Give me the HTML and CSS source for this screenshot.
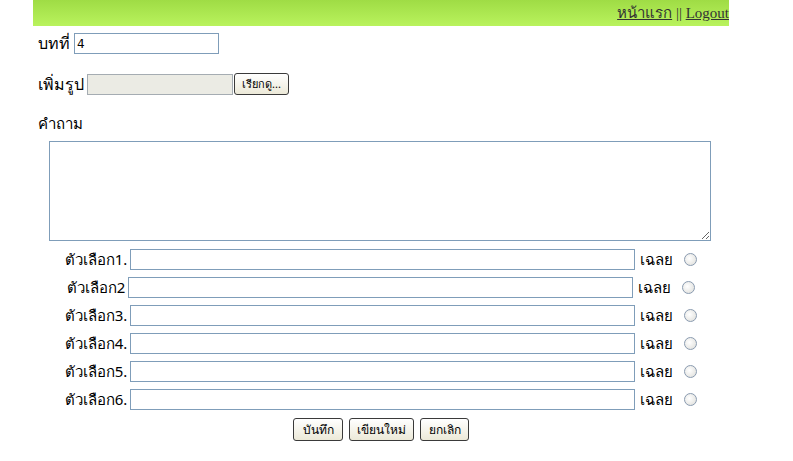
FILE: index.html
```html
<!DOCTYPE html>
<html lang="th">
<head>
    <meta charset="UTF-8">
    <title>เพิ่มข้อสอบ</title>
    <link rel="stylesheet" href="styles.css">
</head>
<body>
    <div class="page">
        <!-- Top bar -->
        <div class="topbar">
            <a href="#">หน้าแรก</a> || <a href="#">Logout</a>
        </div>

        <form class="form">
            <div class="field chapter-row">
                <span>บทที่</span>
                <input type="text" class="text chapter" value="4">
            </div>

            <div class="field file-row">
                <span>เพิ่มรูป</span>
                <span class="file">
                    <span class="file-box"></span>
                    <button type="button" class="btn browse">เรียกดู...</button>
                </span>
            </div>

            <div class="field question-label">คำถาม</div>
            <textarea class="question"></textarea>

            <!-- Choices -->
            <div class="choices">
                <div class="choice"><span>ตัวเลือก1.</span><input type="text" class="text answer"><span class="key">เฉลย</span><span class="radio"></span></div>
                <div class="choice"><span>ตัวเลือก2</span><input type="text" class="text answer"><span class="key">เฉลย</span><span class="radio"></span></div>
                <div class="choice"><span>ตัวเลือก3.</span><input type="text" class="text answer"><span class="key">เฉลย</span><span class="radio"></span></div>
                <div class="choice"><span>ตัวเลือก4.</span><input type="text" class="text answer"><span class="key">เฉลย</span><span class="radio"></span></div>
                <div class="choice"><span>ตัวเลือก5.</span><input type="text" class="text answer"><span class="key">เฉลย</span><span class="radio"></span></div>
                <div class="choice"><span>ตัวเลือก6.</span><input type="text" class="text answer"><span class="key">เฉลย</span><span class="radio"></span></div>
            </div>

            <div class="actions">
                <button type="button" class="btn save">บันทึก</button>
                <button type="button" class="btn reset">เขียนใหม่</button>
                <button type="button" class="btn cancel">ยกเลิก</button>
            </div>
        </form>
    </div>
</body>
</html>
```

FILE: styles.css
```css
/* General */
body {
    margin: 0;
    font-family: "Noto Sans", "DejaVu Sans", sans-serif;
    font-size: 15px;
    color: #000;
    background: #fff;
}

.page {
    width: 696px;
    margin-left: 33px;
}

/* Top bar */
.topbar {
    height: 26px;
    background: linear-gradient(#9fdc45, #b9f35d);
    text-align: right;
    font-family: "Liberation Serif", serif;
    font-size: 15px;
    line-height: 26px;
    color: #333;
}

.topbar a {
    color: #333;
}

/* Form rows */
.field {
    display: flex;
    align-items: center;
    gap: 3px;
    height: 21px;
    padding-left: 5px;
    font-size: 16px;
}

.chapter-row {
    margin-top: 7px;
    gap: 4px;
}

.file-row {
    margin-top: 19px;
    height: 22px;
}

.question-label {
    margin-top: 18px;
    height: 22px;
    font-size: 15px;
}

.text {
    box-sizing: border-box;
    height: 21px;
    border: 1px solid #7f9db9;
    padding: 0 2px;
    font-family: "DejaVu Sans", sans-serif;
    font-size: 12px;
    margin: 0;
}

.chapter {
    width: 145px;
}

.file {
    display: flex;
    align-items: center;
    gap: 1px;
}

.file-box {
    width: 146px;
    height: 21px;
    box-sizing: border-box;
    border: 1px solid #a5acb2;
    background: #ebebe4;
}

/* Question */
.question {
    display: block;
    box-sizing: border-box;
    width: 662px;
    height: 100px;
    margin: 6px 0 0 16px;
    border: 1px solid #7f9db9;
    resize: both;
}

/* Choices */
.choices {
    display: flex;
    flex-direction: column;
    gap: 7px;
    margin-top: 8px;
}

.choice {
    display: flex;
    align-items: center;
    justify-content: center;
    gap: 3px;
    height: 21px;
}

.answer {
    width: 505px;
}

.key {
    margin-left: 2px;
}

.radio {
    width: 11px;
    height: 11px;
    border: 1px solid #8a9bb0;
    border-radius: 50%;
    background: radial-gradient(circle at 40% 40%, #fff, #dcdcd8);
    margin-left: 8px;
}

/* Buttons */
.btn {
    box-sizing: border-box;
    height: 23px;
    padding: 0;
    border: 1px solid #3a3a3a;
    border-radius: 3px;
    background: linear-gradient(#ffffff, #ece9d8);
    font-family: "Noto Sans", sans-serif;
    font-size: 12px;
    color: #000;
}

.browse {
    height: 22px;
    width: 55px;
    font-size: 11px;
}

.save {
    width: 50px;
}

.reset {
    width: 65px;
}

.cancel {
    width: 49px;
}

.actions {
    display: flex;
    justify-content: center;
    gap: 6px;
    margin-top: 8px;
}
```
